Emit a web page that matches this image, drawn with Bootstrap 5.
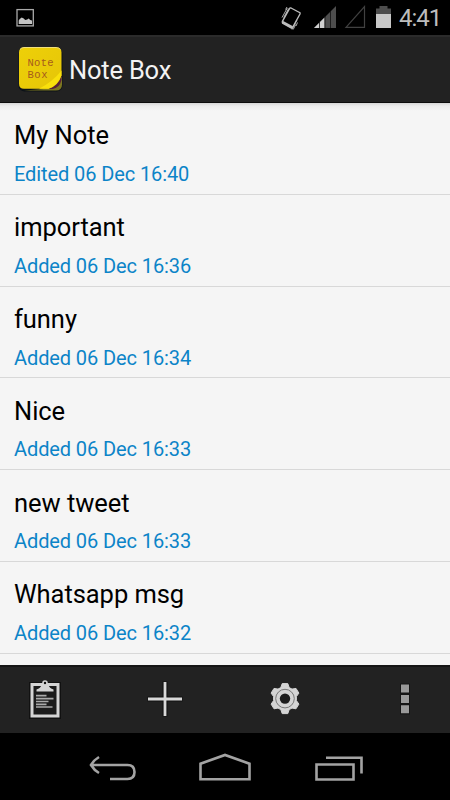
<!DOCTYPE html>
<html lang="en">
<head>
<meta charset="utf-8">
<meta name="viewport" content="width=device-width, initial-scale=1">
<title>Note Box</title>
<link href="https://cdn.jsdelivr.net/npm/bootstrap@5.3.0/dist/css/bootstrap.min.css" rel="stylesheet">
<style>
body{font-family:Roboto,"Liberation Sans",sans-serif;background:#000}
svg{display:block;flex:none}
.screen{width:450px;height:800px}
.statusbar{height:35px;color:#bdbdbd}
.clock{font-size:24px;line-height:37px;width:41px;letter-spacing:-1px;white-space:nowrap}
.appbar{height:68px;background:#222;border-top:2px solid #2b2b2b;border-bottom:1px solid #0c0c0c}
.apptitle{font-size:25.5px;line-height:34px;color:#f3f3f3;letter-spacing:-.2px}
.notes{height:562px;background:linear-gradient(#d6d6d6,#ededed 3px,#f5f5f5 8px);}
.note{height:91.8px;padding:15.4px 14px 0;border-bottom:1px solid #d8d8d8}
.notetitle{font-size:25.5px;line-height:34px;color:#000;letter-spacing:-.05px}
.notedate{font-size:20px;line-height:26px;color:#0c84c8;margin-top:8.6px;letter-spacing:-.1px}
.actions{height:68px;background:#222;border-top:2px solid #151515}
.navkeys{height:67px}
</style>
</head>
<body>
<div class="screen d-flex flex-column overflow-hidden">
  <header class="statusbar d-flex align-items-start flex-shrink-0">
    <svg width="399" height="35" viewBox="0 0 399 35">
      <rect x="17" y="9.600" width="16.300" height="16.300" fill="none" stroke="#a9a9a9" stroke-width="1.300"/>
      <path d="M18.700 24v-3.500l1-1.500 2-1.500 2 1 1.500 1.500 2-.5 1.500-1 1.500 1.500 1.800.5v3.500z" fill="#c4c4c4"/>
      <g fill="none" stroke="#bcbcbc">
        <path d="M291 8l8.500 4.500q1 .5.500 1.500l-7.200 13q-.5 1-1.500.5l-8.400-4.600q-1-.5-.5-1.500l7.200-13q.4-.8 1.400-.4z" stroke-width="1.400"/>
        <path d="M282.500 22.300l9.800 5.300" stroke-width="3"/>
        <path d="M282 17.500l5.300-9.500M283.700 17.500l5-9M285.500 9.500l1.500-2.500M297 20l-5 9.500M295.700 24.500l-2.500 5M297.500 22.500l-1.500 3.500" stroke-width=".9"/>
      </g>
      <path d="M314 28l22-22v22z" fill="#4d4d4d"/>
      <path d="M314 28l10.500-10.500V28z" fill="#d0d0d0"/>
      <path d="M319.500 21v7M325 16v12M330.500 11v17" stroke="#111" stroke-width=".8"/>
      <path d="M346 27.300L364.500 6.500v20.800z" fill="none" stroke="#414141" stroke-width="1.200"/>
      <path d="M376 14V8.500h3.500V6h8v2.500h3.500V14z" fill="#4d4d4d"/>
      <path d="M376 14h15v14h-15z" fill="#c8c8c8"/>
    </svg>
    <div class="clock">4:41</div>
  </header>

  <nav class="appbar d-flex align-items-center flex-shrink-0">
    <svg width="69" height="65" viewBox="0 36.500 69 65">
      <defs><linearGradient id="paper" x1="0" y1="0" x2="1" y2="1"><stop offset="0" stop-color="#eed008"/><stop offset="1" stop-color="#e5c508"/></linearGradient></defs>
      <rect x="18.500" y="47.500" width="44" height="43.500" rx="6" fill="#0c1218"/>
      <path d="M24 90h32q6 0 6-6v-8L50 88z" fill="#7c7620"/>
      <path d="M47 88.500q10-1 14.500-14v5q-2 8-9 9z" fill="#582039"/>
      <path d="M24 47h32.500q5 0 5 5v23q-3 10-13 13.300H24q-5 0-5-5V52q0-5 5-5z" fill="url(#paper)"/>
      <path d="M39 88.300Q53 81 61.500 70v5q-4 10-13 13.300z" fill="#f9e00c"/>
      <path d="M20 49q1.500-2 4-2h32q3 0 4.500 2" fill="none" stroke="#f1df79" stroke-width="1"/>
      <g font-family="'Liberation Mono',monospace" font-size="10.500" fill="#a65b1c"><text x="27.500" y="65" textLength="26">Note</text><text x="27.500" y="77" textLength="20">Box</text></g>
    </svg>
    <div class="apptitle">Note Box</div>
  </nav>

  <main class="notes overflow-hidden flex-shrink-0">
    <div class="note"><div class="notetitle">My Note</div><div class="notedate">Edited 06 Dec 16:40</div></div>
    <div class="note"><div class="notetitle">important</div><div class="notedate">Added 06 Dec 16:36</div></div>
    <div class="note"><div class="notetitle">funny</div><div class="notedate">Added 06 Dec 16:34</div></div>
    <div class="note"><div class="notetitle">Nice</div><div class="notedate">Added 06 Dec 16:33</div></div>
    <div class="note"><div class="notetitle">new tweet</div><div class="notedate">Added 06 Dec 16:33</div></div>
    <div class="note"><div class="notetitle">Whatsapp msg</div><div class="notedate">Added 06 Dec 16:32</div></div>
  </main>

  <div class="actions d-flex flex-shrink-0">
    <svg width="90" height="66" viewBox="0 667 90 66">
      <path d="M31.500 684.500h27v32h-27z" fill="none" stroke="#111" stroke-width="5"/>
      <path d="M32 684.500h26v31.500H32z" fill="#1b1b1b" stroke="#d4d4d4" stroke-width="3"/>
      <path d="M36.500 691.500v-2q4-1 5.500-5.500h6q1.500 4.500 5.500 5.500v2z" fill="#d4d4d4"/>
      <circle cx="45" cy="683" r="2" fill="#111" stroke="#d4d4d4" stroke-width="1.600"/>
      <path d="M36 695.700h10.500M36 698.600h17.500M36 701.500h12.500M36 704.300h10.500M36 707h16.500" stroke="#a9a9a9" stroke-width="1.700"/>
    </svg>
    <svg width="150" height="66" viewBox="90 667 150 66">
      <path d="M147.500 699h35M165 681.500v35" stroke="#111" stroke-width="5"/>
      <path d="M148 699h34M165 682v34" stroke="#d9d9d9" stroke-width="2.800"/>
    </svg>
    <svg width="90" height="66" viewBox="240 667 90 66">
      <g transform="translate(285 698.600)">
        <path d="M-2.800-15H2.800L4.200-11 7-9.500 11-10.200 13.900-5.500 11.400-2V2L13.900 5.500 11 10.200 7 9.500 4.200 11 2.800 15H-2.800L-4.200 11-7 9.500-11 10.200-13.900 5.500-11.400 2V-2L-13.900-5.500-11-10.200-7-9.500-4.200-11z" fill="#d4d4d4" stroke="#d4d4d4" stroke-width="1" stroke-linejoin="round"/>
        <circle r="9.300" fill="none" stroke="#777" stroke-width="1"/>
        <circle r="5.200" fill="#1c1c1c"/>
      </g>
    </svg>
    <svg width="120" height="66" viewBox="330 667 120 66">
      <path d="M400 683.500h10v31h-10z" fill="#141414"/>
      <path d="M401 684.500h8v8h-8zM401 695h8v8h-8zM401 705.300h8v8h-8z" fill="#999"/>
    </svg>
  </div>

  <footer class="navkeys d-flex flex-shrink-0">
    <svg width="450" height="67" viewBox="0 733 450 67">
      <g fill="none" stroke="#a3a3a3" stroke-width="2.600">
        <path d="M99 757q-5 3-8 8 3 5 8 8M91 765h36.500q7 0 7 7t-7 7H110"/>
        <path d="M200.500 779.300v-15.600l24.500-8.700 24.500 8.700v15.600z"/>
        <path d="M316.500 764.500h37v15h-37zM326 757.700h35.500V773.500"/>
      </g>
    </svg>
  </footer>
</div>
<script src="https://cdn.jsdelivr.net/npm/bootstrap@5.3.0/dist/js/bootstrap.bundle.min.js"></script>
</body>
</html>
